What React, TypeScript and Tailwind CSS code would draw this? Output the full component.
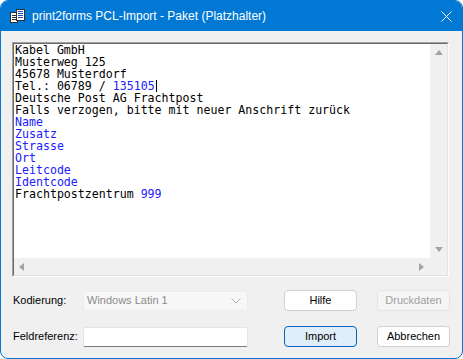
import React from "react";

const mono = { fontFamily: '"DejaVu Sans Mono", "Liberation Mono", monospace' };

function TitleIcon() {
  return (
    <svg width="16" height="16" viewBox="0 0 16 16" className="shrink-0">
      <rect x="0.5" y="4.5" width="7" height="10" fill="#ffffff" stroke="#303030" />
      <rect x="2" y="7" width="4" height="1" fill="#303030" />
      <rect x="2" y="9" width="4" height="1" fill="#303030" />
      <rect x="2" y="11" width="4" height="1" fill="#303030" />
      <rect x="6.5" y="1.5" width="8" height="11" fill="#ffffff" stroke="#303030" />
      <rect x="8" y="3" width="5" height="1" fill="#2050c0" />
      <rect x="8" y="5" width="5" height="1" fill="#2050c0" />
      <rect x="8" y="7" width="5" height="1" fill="#2050c0" />
      <rect x="8" y="9" width="5" height="1" fill="#2050c0" />
    </svg>
  );
}

function Tri({ dir }: { dir: "up" | "down" | "left" | "right" }) {
  const pts =
    dir === "up"
      ? "0,5 8,5 4,0"
      : dir === "down"
      ? "0,0 8,0 4,5"
      : dir === "left"
      ? "5,0 5,8 0,4"
      : "0,0 0,8 5,4";
  const w = dir === "up" || dir === "down" ? 8 : 5;
  const h = dir === "up" || dir === "down" ? 5 : 8;
  return (
    <svg width={w} height={h} viewBox={`0 0 ${w} ${h}`}>
      <polygon points={pts} fill="#a3a3a3" />
    </svg>
  );
}

const B = ({ children }: { children: React.ReactNode }) => (
  <span className="text-[#2020ff]">{children}</span>
);

export default function App() {
  return (
    <div className="w-[463px] h-[359px] bg-white">
      <div
        className="w-[463px] h-[359px] border border-[#0078d4] rounded-[8px] overflow-hidden bg-[#f0f0f0] flex flex-col"
        style={{ fontFamily: '"Liberation Sans", Arial, sans-serif' }}
      >
        {/* Title bar */}
        <div className="h-[30px] bg-[#0078d4] flex items-center pl-[9px] pr-[10px] shrink-0">
          <TitleIcon />
          <div className="ml-[6px] text-white text-[12px] flex-1 leading-none">
            print2forms PCL-Import - Paket (Platzhalter)
          </div>
          <svg width="11" height="11" viewBox="0 0 11 11">
            <path d="M0.5 0.5 L10.5 10.5 M10.5 0.5 L0.5 10.5" stroke="#ffffff" strokeWidth="1" />
          </svg>
        </div>

        {/* Body */}
        <div className="flex-1 pl-[11px] pr-[12px] pt-[11px] flex flex-col">
          {/* Text box */}
          <div className="w-[437px] h-[235px] border-t border-l border-[#a0a0a0] border-r-white border-b-white border-r border-b">
            <div className="w-full h-full border-t border-l border-[#696969] border-r border-b border-r-[#e3e3e3] border-b-[#e3e3e3] flex flex-col bg-white">
              <div className="flex flex-1 min-h-0">
                <div
                  className="flex-1 pl-[1px] pt-0 text-[11.6px] leading-[12px] text-black whitespace-pre"
                  style={mono}
                >
                  <div>Kabel GmbH</div>
                  <div>Musterweg 125</div>
                  <div>45678 Musterdorf</div>
                  <div>
                    Tel.: 06789 / <B>135105</B>
                    <span className="inline-block w-[1px] h-[12px] bg-black align-top ml-[1px]" />
                  </div>
                  <div>Deutsche Post AG Frachtpost</div>
                  <div>Falls verzogen, bitte mit neuer Anschrift zurück</div>
                  <div><B>Name</B></div>
                  <div><B>Zusatz</B></div>
                  <div><B>Strasse</B></div>
                  <div><B>Ort</B></div>
                  <div><B>Leitcode</B></div>
                  <div><B>Identcode</B></div>
                  <div>
                    Frachtpostzentrum <B>999</B>
                  </div>
                </div>
                <div className="w-[17px] bg-[#f0f0f0] flex flex-col items-center justify-between pt-[6px] pb-[6px]">
                  <Tri dir="up" />
                  <Tri dir="down" />
                </div>
              </div>
              <div className="h-[17px] flex shrink-0">
                <div className="flex-1 bg-[#f0f0f0] flex items-center justify-between pl-[5px] pr-[6px]">
                  <Tri dir="left" />
                  <Tri dir="right" />
                </div>
                <div className="w-[17px] bg-[#f0f0f0]" />
              </div>
            </div>
          </div>

          {/* Row 1 */}
          <div className="flex items-center mt-[13px] h-[21px]">
            <div className="w-[71px] pl-[1px] text-[11px] text-black">Kodierung:</div>
            <div className="w-[165px] h-[20px] bg-[#f7f7f7] border border-[#ececec] rounded-[3px] flex items-center pl-[3px] pr-[6px] text-[11px] text-[#8c8c8c]">
              <span className="flex-1">Windows Latin 1</span>
              <svg width="10" height="6" viewBox="0 0 10 6">
                <path d="M0.5 0.5 L5 5 L9.5 0.5" stroke="#b0b0b0" fill="none" strokeWidth="1" />
              </svg>
            </div>
            <div className="ml-[36px] w-[73px] h-[21px] bg-white border border-[#d0d0d0] rounded-[4px] flex items-center justify-center text-[11px] text-black">
              Hilfe
            </div>
            <div className="ml-[20px] w-[73px] h-[21px] bg-[#f5f5f5] border border-[#e5e5e5] rounded-[4px] flex items-center justify-center text-[11px] text-[#a0a0a0]">
              Druckdaten
            </div>
          </div>

          {/* Row 2 */}
          <div className="flex items-center mt-[15px] h-[21px]">
            <div className="w-[71px] pl-[1px] text-[11px] text-black">Feldreferenz:</div>
            <div className="w-[165px] h-[20px] bg-white border border-[#e5e5e5] border-b-[#7a7a7a] rounded-[2px]" />
            <div className="ml-[36px] w-[73px] h-[21px] bg-[#e0eef9] border border-[#0067c0] rounded-[4px] flex items-center justify-center text-[11px] text-black">
              Import
            </div>
            <div className="ml-[20px] w-[73px] h-[21px] bg-white border border-[#d0d0d0] rounded-[4px] flex items-center justify-center text-[11px] text-black">
              Abbrechen
            </div>
          </div>
        </div>
      </div>
    </div>
  );
}
